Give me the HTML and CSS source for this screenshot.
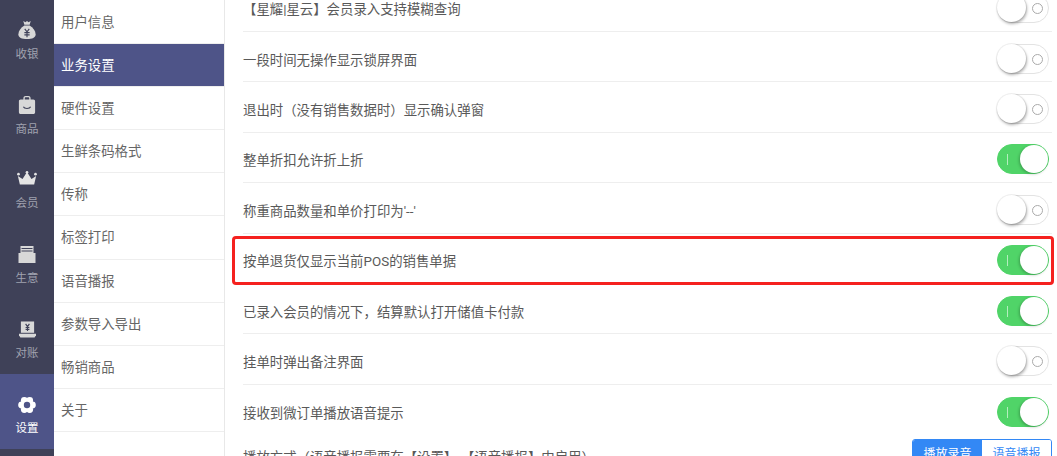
FILE: index.html
```html
<!DOCTYPE html>
<html lang="zh-CN">
<head>
    <meta charset="UTF-8">
    <title>设置</title>
    <link rel="stylesheet" href="styles.css">
</head>
<body>

<div class="app">
    <nav class="nav">
        <a class="nav-item">
            <svg viewBox="0 0 24 24" width="18" height="18"><path fill="#d8d8d8" d="M7 0l3 1.500L12 0l2 1.500L17 0l-1.500 5h-7z"/><path fill="#d8d8d8" d="M8.500 6h7C20 9 23.500 13 23.500 17.500c0 4.500-4.500 6.500-11.500 6.500S.5 22 .5 17.500C.5 13 4 9 8.500 6z"/><path fill="none" stroke="#3f4158" stroke-width="1.500" d="M9 10.500l3 4 3-4M12 14.500v7M8.500 15.500h7M8.500 18.500h7"/></svg>
            <span>收银</span>
        </a>
        <a class="nav-item">
            <svg viewBox="0 0 20 20" width="18" height="18"><path fill="#d8d8d8" d="M6 4V2.500C6 1 7 0 8.500 0h3C13 0 14 1 14 2.500V4h3c1.200 0 2 .8 2 2v12c0 1.200-.8 2-2 2H3c-1.200 0-2-.8-2-2V6c0-1.200.8-2 2-2zm1.500 0h5V2.500c0-.5-.4-1-1-1h-3c-.6 0-1 .5-1 1z"/><path fill="none" stroke="#3f4158" stroke-width="1.300" d="M6 12c1 2.500 7 2.500 8 0"/></svg>
            <span>商品</span>
        </a>
        <a class="nav-item">
            <svg viewBox="0 0 22 19" width="20" height="17"><path fill="#e4e4e4" d="M3 15L.8 5.500 6 9l5-8 5 8 5.200-3.500L19 15z"/><circle cx="1.500" cy="3.500" r="1.500" fill="#e4e4e4"/><circle cx="11" cy="1.500" r="1.500" fill="#e4e4e4"/><circle cx="20.500" cy="3.500" r="1.500" fill="#e4e4e4"/></svg>
            <span>会员</span>
        </a>
        <a class="nav-item">
            <svg viewBox="0 0 18 17" width="18" height="17"><path fill="#d8d8d8" d="M2.500 0h13v7h-13z"/><path fill="#3f4158" d="M3.500 2h11v1h-11zM3.500 4.500h11v1h-11z"/><path fill="#d8d8d8" d="M.5 7h17v10H.5z"/></svg>
            <span>生意</span>
        </a>
        <a class="nav-item">
            <svg viewBox="0 0 18 17" width="17" height="17"><path fill="#d8d8d8" d="M2 0h14v12H2z"/><path fill="none" stroke="#3f4158" stroke-width="1.200" d="M7 2.500l2 3 2-3M9 5.500v4.500M7 6.500h4M7 8.500h4"/><path fill="#d8d8d8" d="M0 13h18v1.500l-1.500 2.500h-15L0 14.500z"/></svg>
            <span>对账</span>
        </a>
        <a class="nav-item nav-active">
            <svg viewBox="0 0 18 16" width="18" height="16">
                <g fill="#fff">
                    <circle cx="14.400" cy="8" r="3.400"/><circle cx="3.600" cy="8" r="3.400"/>
                    <circle cx="11.700" cy="3.400" r="3.400"/><circle cx="6.300" cy="3.400" r="3.400"/>
                    <circle cx="11.700" cy="12.600" r="3.400"/><circle cx="6.300" cy="12.600" r="3.400"/>
                </g>
                <circle cx="9" cy="8" r="3.200" fill="#4e5488"/>
            </svg>
            <span>设置</span>
        </a>
    </nav>

    <ul class="menu">
        <li>用户信息</li>
        <li class="menu-active">业务设置</li>
        <li>硬件设置</li>
        <li>生鲜条码格式</li>
        <li>传称</li>
        <li>标签打印</li>
        <li>语音播报</li>
        <li>参数导入导出</li>
        <li>畅销商品</li>
        <li>关于</li>
    </ul>

    <main class="settings">
        <div class="row"><span>【星耀|星云】会员录入支持模糊查询</span><i class="switch"></i></div>
        <div class="row"><span>一段时间无操作显示锁屏界面</span><i class="switch"></i></div>
        <div class="row"><span>退出时（没有销售数据时）显示确认弹窗</span><i class="switch"></i></div>
        <div class="row"><span>整单折扣允许折上折</span><i class="switch on"></i></div>
        <div class="row"><span>称重商品数量和单价打印为'--'</span><i class="switch"></i></div>
        <div class="row row-marked"><span>按单退货仅显示当前POS的销售单据</span><i class="switch on"></i></div>
        <div class="row"><span>已录入会员的情况下，结算默认打开储值卡付款</span><i class="switch on"></i></div>
        <div class="row"><span>挂单时弹出备注界面</span><i class="switch"></i></div>
        <div class="row row-plain"><span>接收到微订单播放语音提示</span><i class="switch on"></i></div>
        <div class="row-last">
            <span>播放方式（语音播报需要在【设置】-【语音播报】中启用）</span>
            <div class="segment"><b>播放录音</b><b class="off">语音播报</b></div>
        </div>
    </main>
</div>

</body>
</html>
```

FILE: styles.css
```css
* {
    box-sizing: border-box;
}

html, body {
    margin: 0;
    height: 100%;
    overflow: hidden;
}

body {
    font-family: Roboto, "Noto Sans CJK SC", sans-serif;
    background: #fff;
    color: #595959;
}

.app {
    display: flex;
    height: 456px;
    overflow: hidden;
}

/* left icon bar */
.nav {
    width: 54px;
    flex: none;
    background: #3f4158;
    display: flex;
    flex-direction: column;
}

.nav-item {
    height: 74.800px;
    display: flex;
    flex-direction: column;
    align-items: center;
    justify-content: flex-end;
    gap: 7px;
    padding-bottom: 13px;
    font-size: 11.500px;
    line-height: 16px;
    color: #a0a1af;
}

.nav-active {
    background: #4e5488;
    color: #fff;
}

/* second column */
.menu {
    width: 171px;
    flex: none;
    margin: 0;
    padding: 1px 0 0;
    list-style: none;
    border-right: 1px solid #e8e8e8;
}

.menu li {
    height: 43.100px;
    padding-left: 7px;
    font-size: 13.400px;
    line-height: 44px;
    color: #666;
    border-bottom: 1px solid #eee;
}

.menu .menu-active {
    background: #4e5488;
    color: #fff;
}

/* settings list, scrolled a little past its first row */
.settings {
    flex: 1;
    margin-top: -18.400px;
    padding: 0 5px 0 18px;
}

.row {
    height: 50.400px;
    padding-top: 4px;
    display: flex;
    justify-content: space-between;
    align-items: center;
    font-size: 13.400px;
    border-bottom: 1px solid #eee;
    position: relative;
}

.row-plain {
    border-bottom: none;
}

.row-marked::after {
    content: "";
    position: absolute;
    left: -11px;
    right: -2px;
    top: 2px;
    bottom: -2px;
    border: 3px solid #f5211f;
    border-radius: 4px;
}

.row-last {
    display: flex;
    justify-content: space-between;
    align-items: flex-start;
    padding-top: 4px;
    font-size: 13.400px;
}

.row-last span {
    margin-top: 7px;
}

.switch {
    width: 52px;
    height: 30px;
    margin-right: 3px;
    flex: none;
    border-radius: 15px;
    border: 1px solid #e3e3e3;
    background: #fff;
    position: relative;
}

.switch::before {
    content: "";
    position: absolute;
    right: 5px;
    top: 9px;
    width: 9px;
    height: 9px;
    border: 1.500px solid #aaa;
    border-radius: 50%;
}

.switch::after {
    content: "";
    position: absolute;
    left: -1px;
    top: -1px;
    width: 29px;
    height: 29px;
    background: #fff;
    border-radius: 50%;
    box-shadow: 0 0 0 1px rgba(0, 0, 0, 0.06), 1px 2px 3px rgba(0, 0, 0, 0.3);
}

.switch.on {
    background: #50d468;
    border-color: #50d468;
}

.switch.on::before {
    left: 9px;
    right: auto;
    top: 9px;
    width: 1px;
    height: 11px;
    border: none;
    border-radius: 0;
    background: #b5eebf;
}

.switch.on::after {
    left: auto;
    right: 0;
    top: 0;
    width: 28px;
    height: 28px;
    box-shadow: -1px 1px 3px rgba(0, 0, 0, 0.25);
}

.segment {
    display: flex;
    width: 140px;
    height: 30px;
    border: 1px solid #3388f5;
    border-radius: 3px;
    overflow: hidden;
    flex: none;
}

.segment b {
    flex: 1;
    font-weight: normal;
    font-size: 12px;
    line-height: 28px;
    text-align: center;
    background: #3388f5;
    color: #fff;
}

.segment .off {
    background: #fff;
    color: #3388f5;
}
```
